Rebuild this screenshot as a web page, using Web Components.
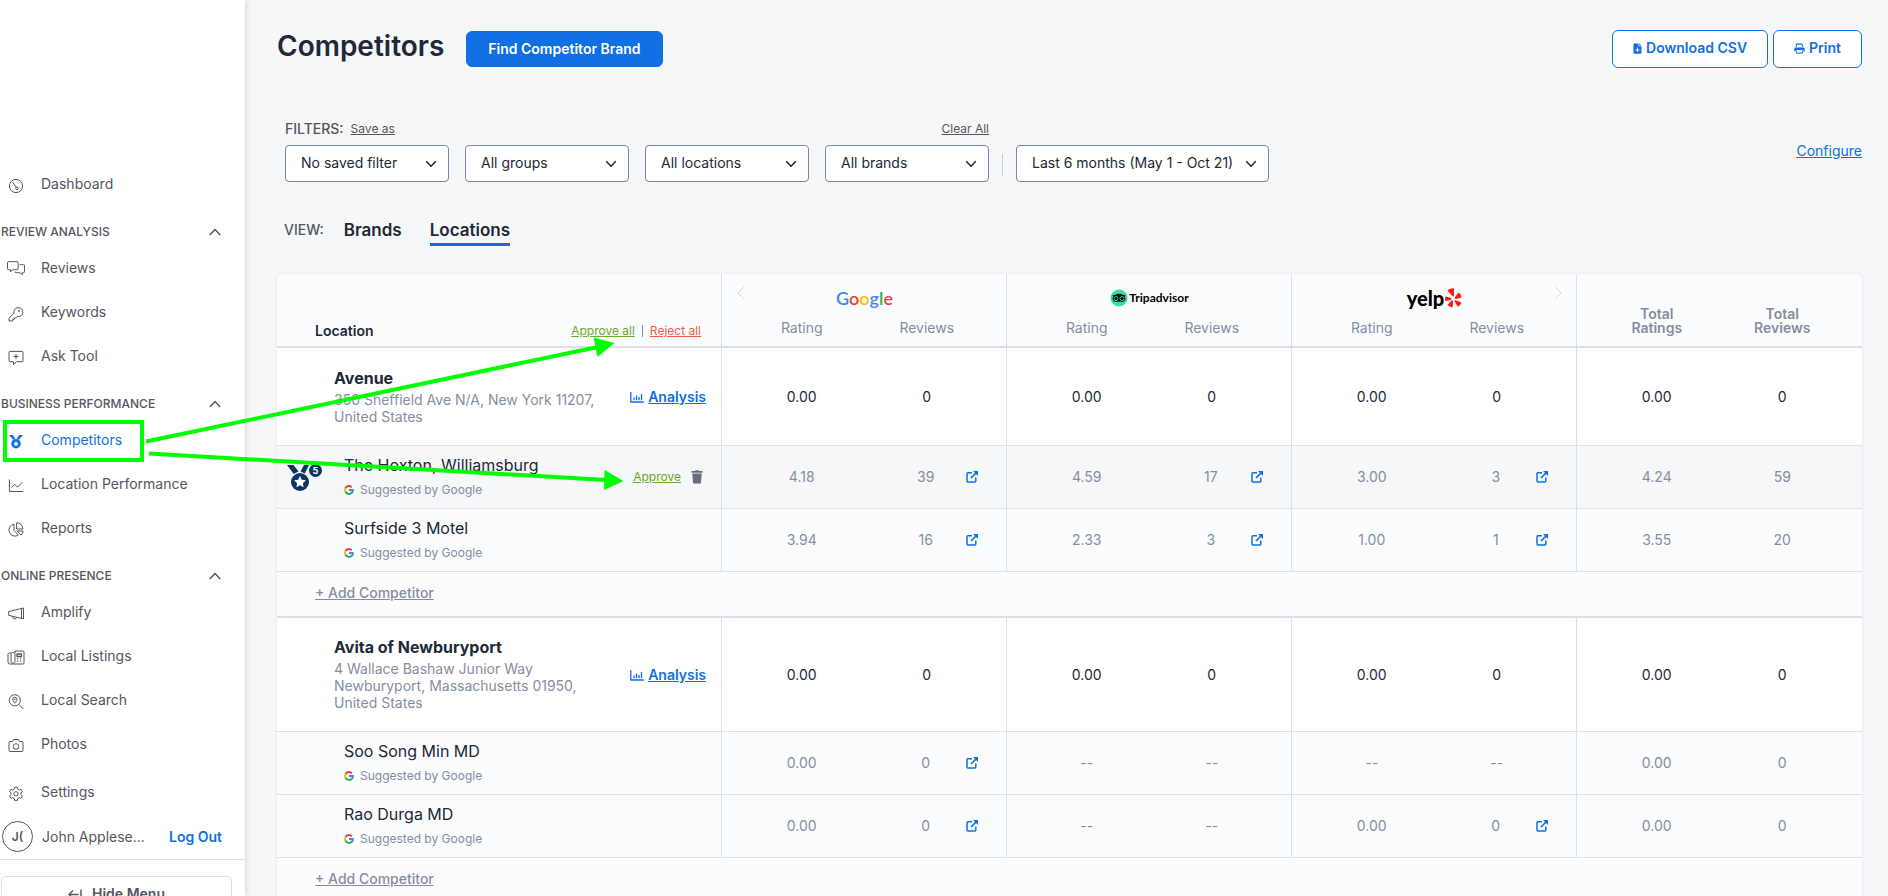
<!DOCTYPE html>
<html lang="en">
<head>
<meta charset="utf-8">
<title>Competitors</title>
<style>
html,body{margin:0;height:100%}
body{
  --ink:#212936;--nav:#54565f;--muted:#858e9f;--blue:#0f6fe3;--line:#dce0e7;--page:#f5f7f9;--pale:#fbfcfe;--green:#68aa2d;--red:#ed5b45;
  font:14px/20px Inter,"Liberation Sans",sans-serif;color:var(--ink);background:var(--page);overflow:hidden;
}
</style>
</head>
<body>
<app-shell>
  <side-bar slot="side"></side-bar>
  <page-header></page-header>
  <filter-bar></filter-bar>
  <view-tabs></view-tabs>
  <competitor-table></competitor-table>
</app-shell>
<callout-overlay></callout-overlay>

<script>
const define=(name,html)=>customElements.define(name,class extends HTMLElement{
  constructor(){
    super();
    this.attachShadow({mode:'open'});
  }
  connectedCallback(){
    this.shadowRoot.innerHTML=typeof html==='function'?html(this):html;
  }
});

/* icons: [width, height, markup] */
const ICONS={
  gauge:[18,18,'<circle cx="9" cy="9" r="6.6"/><path d="M5.6 5.2l3.6 5.2"/><circle cx="10" cy="11.3" r="1.3"/>'],
  chats:[18,18,'<path d="M1.5.7h8.6q1 0 1 1v6q0 1-1 1H5.6L3.4 11V8.700H1.500q-1 0-1-1v-6q0-1 1-1z"/><path d="M12.500 3.700h4q1 0 1 1v6q0 1-1 1h-1.200v2l-2.600-2H9q-1 0-1-1V10.500"/>'],
  key:[18,18,'<path d="M7 8.200a4.500 4.500 0 1 1 3.200 3.200L8.600 13H7v1.600H5.500V16H2v-2.800z"/><circle cx="12" cy="6" r=".6"/>'],
  ask:[18,18,'<path d="M3 2.400h12q1 0 1 1v8.300q0 1-1 1H9.600L6.500 15.500v-2.800H3q-1 0-1-1V3.400q0-1 1-1z"/><path d="M9 5v5M6.500 7.500h5"/>'],
  trend:[18,18,'<path d="M2.400 2.500v12h13.500"/><path d="M4.500 10.500l3.200-3 2.800 2.600 4.700-4.700"/>'],
  pie:[18,18,'<path d="M7 3.200a6 6 0 1 0 4.300 10.900L7 9.500z"/><path d="M9.600 1.800V8h6.200a6.200 6.200 0 0 0-6.200-6.200z"/><path d="M10 10h6a6 6 0 0 1-1.900 4.100z"/>'],
  horn:[18,18,'<path d="M16.500 3L1.600 6.600v3.700l14.900 3.600zM5.500 11.500a2.300 2.300 0 0 0 4.400 1M14.500 3.500v10"/>'],
  listing:[18,18,'<path d="M4 4H2.500q-1.500 0-1.500 1.500V13q0 2 2 2h13q1 0 1-1V3q0-1-1-1H8v2"/><rect x="4" y="3.500" width="4" height="10.500" rx="1.600"/><path d="M10 5h4.500v2.500H10zM10.200 9.500h1m2 0h1m-4 2.500h1m2 0h1" stroke-width="1.300"/>'],
  search:[18,18,'<circle cx="7.800" cy="7.300" r="5.600"/><path d="M11.800 11.400L16.300 16M7.800 10.200S5.700 8 5.700 6.400a2.100 2.100 0 0 1 4.200 0C9.900 8 7.800 10.200 7.800 10.200z"/><circle cx="7.800" cy="6.500" r=".5"/>'],
  camera:[18,18,'<path d="M3 4.500h2.700l.8-2h5l.8 2H15q1 0 1 1v8q0 1-1 1H3q-1 0-1-1v-8q0-1 1-1z"/><circle cx="9" cy="9.500" r="2.800"/>'],
  gear:[18,18,'<path d="M7.700 2.200h2.600l.4 1.900 1.500.9 1.900-.6 1.300 2.200-1.500 1.300v1.800l1.500 1.300-1.300 2.200-1.900-.6-1.500.9-.4 1.900H7.700l-.4-1.900-1.500-.9-1.900.6-1.300-2.200 1.500-1.300V7.900L2.600 6.600l1.300-2.200 1.900.6 1.500-.9z"/><circle cx="9" cy="8.800" r="2.200"/>'],
  medal:[18,18,'<g fill="currentColor" stroke="none"><path d="M2 2h3.700l2.600 3.400-2.300 1.300zM16 2h-3.700L9.700 5.400l2.300 1.300z"/><path fill-rule="evenodd" d="M9 5.900a4.800 4.800 0 1 1 0 9.600 4.800 4.800 0 0 1 0-9.600zm0 2.100l-.8 1.800-2 .2 1.500 1.300-.4 2L9 12.300l1.700 1-.4-2L11.800 10l-2-.2z"/></g>'],
  up:[12,8,'<path d="M.8 7L6 1.400 11.200 7" stroke-width="1.400"/>'],
  down:[12,8,'<path d="M1.200 1.300L6 6.200l4.800-4.900" stroke-width="1.500"/>'],
  prev:[8,14,'<path d="M7 1L1 7l6 6"/>'],
  next:[8,14,'<path d="M1 1l6 6-6 6"/>'],
  hide:[14,12,'<path d="M10.500 6.500h-9M5 2.500l-4 4 4 4M13 1.500v9" stroke-width="1.400"/>'],
  csv:[9,11,'<path fill="currentColor" stroke="none" fill-rule="evenodd" d="M1 .5h4.500v2.700H8.500V10q0 .8-.8.8H1.300Q.5 10.800.5 10V1.200Q.5.500 1 .5zM4 4.500v2H2.300l2.200 2.500 2.200-2.500H5v-2z"/><path fill="currentColor" stroke="none" d="M6.200.5l2.300 2H6.200z"/>'],
  print:[11,11,'<path fill="currentColor" stroke="none" fill-rule="evenodd" d="M1.800.6h6l1.400 1.400v2h-1V2.400L7.400 1.700H2.800V4h-1zM1.300 4.400h8.400q1 0 1 1v2.900H9.200V7H1.800v1.300H.3V5.400q0-1 1-1z"/><path d="M2.300 7.600v2.500h6.400V7.600"/>'],
  ext:[12,12,'<path d="M6 1.800H1.900q-.9 0-.9.900V10q0 .9.900.9h7q.9 0 .9-.9V6.500" stroke-width="1.500"/><path d="M5 7l5-5" stroke-width="1.700"/><path fill="currentColor" stroke="none" d="M7 0h5v5z"/>'],
  trash:[12,14,'<path fill="currentColor" stroke="none" d="M4 1l.5-.8h3L8 1h3.500v1.700H.5V1zM1.300 3.500h9.400L10 12.600q-.1 1-1.100 1H3.100q-1 0-1.100-1z"/>'],
  chart:[14,12,'<path d="M.8 1v10h13M4 6.500v2.700M6.500 4.500v4.700M9 6v3.200M11.500 3v6.200" stroke-width="1.300"/>'],
  badge:[28,28,'<g fill="#0b3766" stroke="none"><path d="M1 2h6.500l5 6.500-4.800 2.500zM23 2h-5l-3.500 6.500 4.300 2z"/><circle cx="14" cy="19" r="9"/></g><path fill="#fff" stroke="none" d="M14 13l1.800 3.800 4.100.5-3 2.900.7 4.100-3.600-2-3.600 2 .7-4.100-3-2.900 4.100-.5z"/>'],
  g:[10,10,'<g stroke-width="2"><path stroke="#ea4335" d="M1.500 3.100A3.900 3.900 0 0 1 7.800 2.300"/><path stroke="#fbbc05" d="M1.600 7a3.900 3.900 0 0 1 0-4"/><path stroke="#34a853" d="M7.700 7.800a3.900 3.900 0 0 1-6.200-1"/><path stroke="#4285f4" d="M5 5.100h3.900a3.900 3.900 0 0 1-1.300 2.800"/></g>'],
  owl:[18,18,'<g stroke="none"><circle cx="9" cy="9" r="8.500" fill="#34e0a1"/><path fill="#000" d="M2.500 6h2.300Q9 3.400 13.200 6h2.300l-1 1.200a3.500 3.500 0 0 1-4.700 5.100L9 13.400l-.8-1.100A3.500 3.500 0 0 1 3.500 7.200z"/></g><g stroke="#34e0a1" stroke-width="1"><circle cx="6" cy="9.600" r="2"/><circle cx="12" cy="9.600" r="2"/></g>'],
  burst:[17,20,'<g fill="#ff1a1a" stroke="none"><path d="M3 1.800Q5.500.2 8 .3q1 .1 1 1v6.500q-.4 1.300-1.500.4L2.800 3q-.4-.8.200-1.200z"/><path d="M.8 8.500L6.300 10q1 .7 0 1.400L1.200 13q-1 .2-1.100-.8Q0 10.400.2 9z"/><path d="M3 16.300l3.700-3.900q1.300-.6 1.300.7l-.2 5.400q-.2 1-1.200.8-2.100-.5-3.500-1.700-.6-.6-.1-1.300z"/><path d="M10.500 12.300l5 1.600q.9.400.5 1.300-.8 1.800-2.200 3-.8.600-1.400-.2L9.600 13.500q-.4-1.300.9-1.200z"/><path d="M9.800 9.500L13 5.200q.6-.7 1.400 0 1.500 1.500 2.100 3.300.2.900-.7 1.200l-5 1.200q-1.300 0-1-1.400z"/></g>']
};
define('app-icon',el=>{
  const [w,h,body]=ICONS[el.getAttribute('name')];
  return `<style>:host{display:inline-block;flex:none;line-height:0;width:${w}px;height:${h}px}svg{display:block}</style>
  <svg aria-hidden="true" width="${w}" height="${h}" viewBox="0 0 ${w} ${h}" fill="none" stroke="currentColor" stroke-width="1" stroke-linejoin="round">${body}</svg>`;
});

define('app-shell',`<style>
:host{display:flex;height:100vh}
main{flex:1;min-width:0;padding:30px 26px 0 32px;overflow-y:auto;scrollbar-width:none}
</style><slot name="side"></slot><main><slot></slot></main>`);

define('nav-item',el=>`<style>
:host{display:block}
a{display:flex;align-items:center;gap:16px;height:44px;padding-left:7px;color:${el.hasAttribute('active')?'var(--blue)':'var(--nav)'};text-decoration:none}
app-icon{margin-top:4px}
</style><a href="#" ${el.hasAttribute('active')?'aria-current="page"':''}><app-icon name="${el.getAttribute('icon')}"></app-icon><slot></slot></a>`);

define('nav-section',el=>`<style>
:host{display:block}
button{all:unset;box-sizing:border-box;display:flex;align-items:center;justify-content:space-between;width:100%;height:40px;padding:12px 24px 0 1px;font-size:12px;font-weight:500;color:var(--nav);cursor:pointer}
</style><button type="button" aria-expanded="true">${el.getAttribute('heading')}<app-icon name="up"></app-icon></button><slot></slot>`);

define('side-bar',`<style>
:host{display:block;flex:none;width:245px;background:#fff;box-shadow:0 0 6px #0003;overflow:hidden;z-index:1}
nav{padding-top:162px}
.foot{margin-top:4px}
.user{display:flex;align-items:center;height:45px;padding:0 23px 0 2px;border-bottom:1px solid var(--line);color:var(--nav)}
.avatar{box-sizing:border-box;flex:none;width:31px;height:31px;border:1px solid var(--nav);border-radius:50%;display:grid;place-items:center;font-size:12px;font-weight:600;margin-right:9px}
.user a{margin-left:auto;color:var(--blue);font-weight:600;text-decoration:none}
.hide{box-sizing:border-box;display:flex;align-items:center;justify-content:center;gap:10px;width:231px;height:36px;margin:16px 0 16px 1px;background:#fff;border:1px solid var(--line);border-radius:5px;font:600 14px/20px Inter,sans-serif;color:var(--nav)}
</style>
<nav>
  <nav-item icon="gauge">Dashboard</nav-item>
  <nav-section heading="REVIEW ANALYSIS"><nav-item icon="chats">Reviews</nav-item><nav-item icon="key">Keywords</nav-item><nav-item icon="ask">Ask Tool</nav-item></nav-section>
  <nav-section heading="BUSINESS PERFORMANCE"><nav-item icon="medal" active>Competitors</nav-item><nav-item icon="trend">Location Performance</nav-item><nav-item icon="pie">Reports</nav-item></nav-section>
  <nav-section heading="ONLINE PRESENCE"><nav-item icon="horn">Amplify</nav-item><nav-item icon="listing">Local Listings</nav-item><nav-item icon="search">Local Search</nav-item><nav-item icon="camera">Photos</nav-item></nav-section>
</nav>
<div class="foot">
  <nav-item icon="gear">Settings</nav-item>
  <div class="user"><span class="avatar">J(</span><span>John Applese...</span><a href="#">Log Out</a></div>
  <button class="hide" type="button"><app-icon name="hide"></app-icon>Hide Menu</button>
</div>`);

define('action-button',`<style>
:host{display:block}
button{box-sizing:border-box;display:flex;align-items:center;gap:4px;height:38px;padding:0 20px 2px;border:1px solid var(--blue);border-radius:6px;background:#fff;color:var(--blue);font:600 14px/20px Inter,sans-serif;cursor:pointer}
:host([primary]) button{height:36px;padding:0 21px;background:var(--blue);color:#fff}
</style><button type="button"><slot></slot></button>`);

define('page-header',`<style>
:host{display:flex;align-items:center;height:38px}
h1{align-self:flex-start;margin:0 22px 0 0;font-size:28px;line-height:32px;font-weight:600}
.tools{margin-left:auto;display:flex;gap:5px}
</style><h1>Competitors</h1><action-button primary>Find Competitor Brand</action-button>
<div class="tools"><action-button><app-icon name="csv"></app-icon>Download CSV</action-button><action-button><app-icon name="print"></app-icon>Print</action-button></div>`);

define('filter-select',el=>`<style>
:host{display:grid;grid-template-columns:1fr 24px;align-items:center}
select{appearance:none;grid-area:1/1/2/3;box-sizing:border-box;width:100%;height:37px;padding:0 24px 2px 15px;border:1px solid #7b86a5;border-radius:4px;background:#fff;color:var(--ink);font:14px/20px Inter,sans-serif}
app-icon{grid-area:1/2;pointer-events:none}
</style><select aria-label="${el.getAttribute('label')}"><option>${el.getAttribute('value')}</option></select><app-icon name="down"></app-icon>`);

define('filter-bar',`<style>
:host{display:flex;align-items:center;justify-content:space-between;margin:51px 0 0 8px}
.left{display:flex;align-items:flex-end}
.top{display:flex;align-items:center;gap:7px;height:20px;margin-bottom:6px;font-weight:500;color:var(--nav)}
.top a{font-size:12px;font-weight:400;color:var(--nav)}
.top a:last-child{margin-left:auto}
.row{display:grid;grid-template-columns:repeat(4,164px);gap:16px}
.bar{width:1px;height:22px;margin:0 13px 6px;background:#c9ced8}
.date{width:253px}
.conf{color:var(--blue)}
</style>
<div class="left"><div><div class="top"><span>FILTERS:</span><a href="#">Save as</a><a href="#">Clear All</a></div>
<div class="row"><filter-select label="Saved filter" value="No saved filter"></filter-select><filter-select label="Groups" value="All groups"></filter-select><filter-select label="Locations" value="All locations"></filter-select><filter-select label="Brands" value="All brands"></filter-select></div></div>
<div class="bar"></div><filter-select class="date" label="Period" value="Last 6 months (May 1 - Oct 21)"></filter-select></div>
<a class="conf" href="#">Configure</a>`);

define('view-tabs',`<style>
:host{display:flex;align-items:flex-start;margin:38px 0 28px 7px}
span{font-weight:500;color:var(--nav);margin-right:20px}
a{font-size:17px;font-weight:600;color:var(--ink);text-decoration:none;padding-bottom:3px;border-bottom:3px solid transparent;margin-right:28px}
a[aria-current]{border-color:var(--blue)}
</style><span>VIEW:</span><a href="#">Brands</a><a href="#" aria-current="page">Locations</a>`);

define('brand-logo',el=>({
  google:`<span class="goo"><i style="color:#4285f4">G</i><i style="color:#ea4335">o</i><i style="color:#fbbc05">o</i><i style="color:#4285f4">g</i><i style="color:#34a853">l</i><i style="color:#ea4335">e</i></span>`,
  tripadvisor:`<app-icon name="owl"></app-icon><span class="trip">Tripadvisor</span>`,
  yelp:`<span class="yelp">yelp</span><app-icon name="burst"></app-icon>`
})[el.getAttribute('brand')]+`<style>
:host{display:flex;align-items:center;justify-content:center;height:24px;gap:1px;color:#000}
i{font-style:normal}
.goo{font:600 18px/24px Lato,sans-serif}
.trip{font:700 12px/20px Lato,sans-serif}
.yelp{font:900 20px/24px Lato,sans-serif}
</style>`);

const suggested='<div class="sug"><app-icon name="g"></app-icon>Suggested by Google</div>';
const groups=[
  {name:'Avenue',addr:'350 Sheffield Ave N/A, New York 11207,<br>United States',rivals:[
    {name:'The Hoxton, Williamsburg',pending:true,v:['4.18','39*','4.59','17*','3.00','3*','4.24','59']},
    {name:'Surfside 3 Motel',v:['3.94','16*','2.33','3*','1.00','1*','3.55','20']}]},
  {name:'Avita of Newburyport',addr:'4 Wallace Bashaw Junior Way<br>Newburyport, Massachusetts 01950,<br>United States',rivals:[
    {name:'Soo Song Min MD',v:['0.00','0*','--','--','--','--','0.00','0']},
    {name:'Rao Durga MD',v:['0.00','0*','--','--','0.00','0*','0.00','0']}]}
];
/* a trailing star marks a review count that links out to its source */
const cell=v=>v.endsWith('*')
  ?`<td><div class="linked"><span>${v.slice(0,-1)}</span><a href="#" aria-label="Open reviews"><app-icon name="ext"></app-icon></a></div></td>`
  :`<td>${v}</td>`;
const rows=groups.map(g=>`<tbody>
<tr class="own"><th scope="row"><div class="lead"><div><b>${g.name}</b><p>${g.addr}</p></div><a class="an" href="#"><app-icon name="chart"></app-icon><span>Analysis</span></a></div></th>${['0.00','0','0.00','0','0.00','0','0.00','0'].map(cell).join('')}</tr>
${g.rivals.map(r=>`<tr class="rival${r.pending?' pending':''}"><th scope="row"><div class="rl"><div class="mark">${r.pending?'<app-icon name="badge"></app-icon><em>5</em>':''}</div><div class="who"><span class="nm">${r.name}</span>${suggested}</div>${r.pending?'<a class="ok" href="#">Approve</a><button type="button" aria-label="Remove"><app-icon name="trash"></app-icon></button>':''}</div></th>${r.v.map(cell).join('')}</tr>`).join('')}
<tr class="add"><td colspan="9"><a href="#">+ Add Competitor</a></td></tr></tbody>`).join('');

define('competitor-table',`<style>
:host{display:block;background:var(--pale);border-radius:5px;box-shadow:0 0 3px #2129361a}
table{width:100%;table-layout:fixed;border-collapse:separate;border-spacing:0}
.c0{width:445px}
th,td{box-sizing:border-box;padding:0;font-weight:400;text-align:center}
th[scope=row]{text-align:left}
thead th{vertical-align:bottom;color:var(--muted)}
thead .b,thead tr:last-child th{border-bottom:2px solid var(--line)}
thead .loc{border-right:1px solid var(--line);padding:0 20px 5px 38px}
.loc div{display:flex;align-items:center}
.loc b{font-weight:600;color:var(--ink);margin-right:auto}
.loc a,.ok{font-size:12px}
.loc i{width:1px;height:12px;margin:0 7px;background:var(--muted)}
.ok{color:var(--green)}.no{color:var(--red)}
.brand{height:40px;border-right:1px solid var(--line)}
.bl{display:grid;grid-template-columns:8px 1fr 8px;align-items:start;padding:12px 14px 4px 15px;color:#d3d7de}
.bl .prev{grid-area:1/1}.bl .next{grid-area:1/3}
.bl brand-logo{grid-area:1/2}
thead tr:last-child th{height:34px;padding-top:4px;padding-bottom:8px}
.r{padding-left:17px}.v{padding-right:17px}
thead .v,tbody tr td:nth-child(odd):not([colspan]){border-right:1px solid var(--line);padding-right:17px}
tbody tr td:nth-child(even){padding-left:17px}
tbody td:last-child,thead .b.v{border-right:0 !important}
thead .tot{font-weight:600;line-height:14px;padding-bottom:11px}
tbody th,tbody td{border-bottom:1px solid var(--line)}
tbody th{border-right:1px solid var(--line)}
.own th,.own td{height:98px;background:#fff}
.lead{display:flex;align-items:center;min-height:97px;box-sizing:border-box;padding:0 15px 0 57px}
.lead>div{flex:1;padding:19px 0 20px}
.lead b{display:block;font-size:16px;font-weight:700}
p{margin:3px 0 0;line-height:17px;color:var(--muted)}
.an{display:flex;align-items:center;gap:4px;color:var(--blue);font-weight:600;text-decoration:none}
.an span{text-decoration:underline}
.rival th,.rival td{height:63px;color:var(--muted)}
.pending th,.pending td{background:var(--page)}
.rl{display:flex;align-items:center;padding-right:18px}
.mark{position:relative;width:57px;height:28px;padding-left:9px;box-sizing:border-box}
.mark em{position:absolute;left:32px;top:1px;width:13px;height:13px;border-radius:50%;background:#0b3766;color:#fff;font:700 9px/13px Inter,sans-serif;text-align:center;box-shadow:0 0 0 1px var(--page)}
.who{flex:1;padding-left:10px}
.nm{font-size:16px;color:var(--ink)}
.sug{display:flex;align-items:center;gap:6px;margin-top:4px;font-size:12px}
.rl button{all:unset;display:flex;margin-left:10px;color:#666d7c}
.linked{display:grid;grid-template-columns:33px 1fr 35px;align-items:center}
.linked span{grid-column:2}
.linked a{color:var(--blue);line-height:0}
.add td{height:46px;padding:0 0 2px 38px !important;text-align:left;border-bottom:2px solid var(--line)}
.add a{font-weight:500;color:var(--muted)}
</style>
<table>
<colgroup><col class="c0"><col><col><col><col><col><col><col><col></colgroup>
<thead><tr>
<th class="loc b" rowspan="2" scope="col"><div><b>Location</b><a class="ok" href="#">Approve all</a><i></i><a class="no" href="#">Reject all</a></div></th>
<th class="brand" colspan="2"><div class="bl"><app-icon class="prev" name="prev"></app-icon><brand-logo brand="google"></brand-logo></div></th>
<th class="brand" colspan="2"><div class="bl"><brand-logo brand="tripadvisor"></brand-logo></div></th>
<th class="brand" colspan="2"><div class="bl"><brand-logo brand="yelp"></brand-logo><app-icon class="next" name="next"></app-icon></div></th>
<th class="b r tot" rowspan="2" scope="col">Total<br>Ratings</th><th class="b v tot" rowspan="2" scope="col">Total<br>Reviews</th></tr>
<tr><th class="r">Rating</th><th class="v">Reviews</th><th class="r">Rating</th><th class="v">Reviews</th><th class="r">Rating</th><th class="v">Reviews</th></tr></thead>
${rows}</table>`);

define('callout-overlay',`<style>
:host{position:absolute;left:0;top:0;pointer-events:none;z-index:5}
svg{display:block}
</style><svg width="640" height="500" aria-hidden="true" fill="none" stroke="#0f0" stroke-width="4">
<rect x="5" y="422" width="137" height="38"/>
<path d="M146 441.500L598 347M149 453.500L606 480"/>
<path fill="#0f0" stroke="none" d="M593.500 337.500l21 5.500-17 14zM604.500 470l19 11-19.500 9z"/></svg>`);
</script>
</body>
</html>
